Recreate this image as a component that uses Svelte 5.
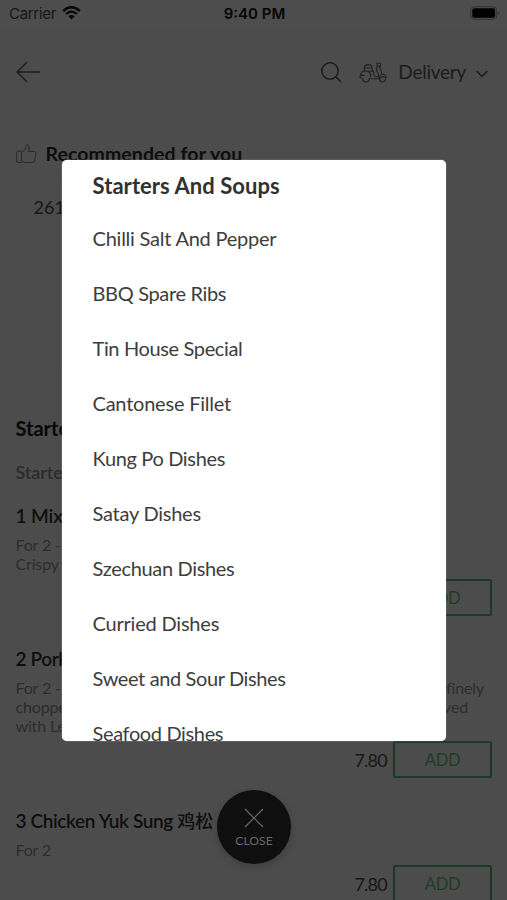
<script>
  const categories = [
    { name: 'Chilli Salt And Pepper', tracking: -0.23 },
    { name: 'BBQ Spare Ribs', tracking: -0.34 },
    { name: 'Tin House Special', tracking: -0.36 },
    { name: 'Cantonese Fillet', tracking: -0.22 },
    { name: 'Kung Po Dishes', tracking: -0.35 },
    { name: 'Satay Dishes', tracking: -0.24 },
    { name: 'Szechuan Dishes', tracking: -0.33 },
    { name: 'Curried Dishes', tracking: -0.2 },
    { name: 'Sweet and Sour Dishes', tracking: -0.38 },
    { name: 'Seafood Dishes', tracking: -0.36 }
  ];
</script>

<div class="screen">
  <header class="status">
    <span class="carrier">Carrier
      <svg width="19" height="14" viewBox="0 0 19 14" fill="none" stroke="#060606">
        <path d="M1.2 4.9Q9.5-2.4 17.8 4.9" stroke-width="2.6" />
        <path d="M4.1 8Q9.5 3.2 14.9 8" stroke-width="2.3" />
        <path d="M9.5 13.6L6.4 10.3Q9.5 7.7 12.6 10.3Z" fill="#060606" stroke="none" />
      </svg>
    </span>
    <span class="time">9:40 PM</span>
    <svg class="battery" width="30" height="14" viewBox="0 0 30 14">
      <rect x=".7" y=".7" width="26" height="12.6" rx="3.6" fill="none" stroke="#333" />
      <rect x="2.3" y="2.3" width="22.8" height="9.4" rx="2" fill="#000" />
      <path d="M28 5Q30 7 28 9Z" fill="#333" />
    </svg>
  </header>

  <nav>
    <svg class="back" width="25" height="22" viewBox="0 0 25 22" fill="none" stroke="#1d1d1d" stroke-width="1.5">
      <path d="M24 11H1.5M11 1L1.2 11L11 21" />
    </svg>
    <svg class="search" width="21" height="21" viewBox="0 0 21 21" fill="none" stroke="#1b1b1b" stroke-width="1.5">
      <circle cx="9" cy="9" r="8.2" /><path d="M14.8 14.8L20 20" />
    </svg>
    <svg class="scooter" width="28" height="21" viewBox="0 0 28 21" fill="none" stroke="#202020" stroke-width="1.1" stroke-linejoin="round" stroke-linecap="round">
      <path d="M5.2 9.2V6.3Q5.2 2.6 9.4 2.6Q13.2 2.6 13.2 6.3V9.2M5.2 6H13.2M3.3 9.3H14.5L15.2 13.4Q16 15.2 18.5 14.7Q20.3 13.6 18.6 10.3L17.2 6.8L18.2 4.2L17.8 1.2H21.5V4.2H18.5M20.2 4.8Q22.5 8.4 22.7 12.3M3.4 9.4Q.6 12.3 1 15.5L3.4 16.4M10.5 16.7H19.6Q20.2 13 23.8 12.2Q27 12.4 27 15.7L24.3 14.9Q20.9 14.5 20.2 17M1.8 13.4H5.2M9 9.5Q12.5 11 11.5 14.6" />
      <path d="M3.8 16.7A3.2 3.2 0 0 0 10.2 16.7M20.5 17A3 3 0 0 0 26.5 17" />
    </svg>
    <span class="mode">Delivery</span>
    <svg class="chevron" width="12" height="8" viewBox="0 0 12 8" fill="none" stroke="#1a1a1a" stroke-width="1.5"><path d="M.7 1L6 6.5L11.3 1" /></svg>
  </nav>

  <main>
    <h2 class="recommended">
      <svg width="21" height="20" viewBox="0 0 21 20" fill="none" stroke="#292929" stroke-width="1" stroke-linejoin="round">
        <path d="M5.5 8.3Q9.8 6 10.1 2.6V1.6Q10.4.5 11.6.7Q13.8 1.7 12.7 6.3L12.5 7.4H18Q20 7.6 19.9 9.6L18.6 16.8Q18 18.5 16.3 18.5H8.5L5.5 17.2V8.3ZM5.5 7.2H2Q.6 7.4.6 9V17Q.6 18.5 2.2 18.5H5.5" />
      </svg>
      Recommended for you
    </h2>
    <div class="cards"><div class="card">261</div><div class="card next"></div></div>
    <h2 class="section">Starters And Soups</h2>
    <h3>Starters</h3>

    <article class="first">
      <h4>1 Mix</h4>
      <p>For 2 -</p>
      <p>Crispy</p>
      <div class="buy"><button>ADD</button></div>
    </article>
    <article class="second">
      <h4>2 Pork</h4>
      <p class="wide"><span>For 2 -</span><span>finely</span></p>
      <p class="wide short"><span>chopped</span><span>served</span></p>
      <p>with Lettuce</p>
      <div class="buy"><span>7.80</span><button>ADD</button></div>
    </article>
    <article class="third">
      <h4>3 Chicken Yuk Sung <span class="cjk">鸡松</span></h4>
      <p>For 2</p>
      <div class="buy"><span>7.80</span><button>ADD</button></div>
    </article>
  </main>

  <section class="menu">
    <h1>Starters And Soups</h1>
    {#each categories as category}
      <div class="row" style:letter-spacing="{category.tracking}px">{category.name}</div>
    {/each}
  </section>

  <div class="close">
    <svg width="20" height="20" viewBox="0 0 20 20" stroke="#696969" stroke-width="1.2"><path d="M1 1L19 19M19 1L1 19" /></svg>
    <span>CLOSE</span>
  </div>
</div>

<style>
  .screen {
    position: relative; width: 507px; height: 900px; overflow: hidden;
    background: #4c4c4c; color: #161616; font-family: Lato, "Noto Sans CJK SC", sans-serif;
  }
  .screen * { box-sizing: border-box; }
  svg { display: block; flex: none; }
  h1, h2, h3, h4, p { margin: 0; white-space: nowrap; }
  .status {
    height: 28px; padding: 0 7px 0 9px; display: grid; grid-template-columns: 1fr auto 1fr;
    align-items: center; font: 15px/28px Inter, sans-serif; background: #4d4d4d;
  }
  .carrier { display: flex; align-items: center; gap: 6px; color: #151515; letter-spacing: -.3px; }
  .carrier svg { margin-top: -3px; }
  .time { font-weight: 600; color: #060606; letter-spacing: 0; }
  .battery { justify-self: end; margin-top: -2px; }
  nav { height: 88px; padding: 0 19px 0 16px; display: flex; align-items: center; }
  .search { margin-left: auto; }
  .scooter { margin-left: 17px; }
  .mode { margin-left: 11px; font-size: 19px; line-height: 24px; letter-spacing: -.25px; color: #1b1b1b; }
  .chevron { margin: 3px 0 0 10px; }
  main { padding: 25px 15px 0 15.5px; }
  .recommended { display: flex; gap: 9px; height: 39px; font-size: 19.5px; line-height: 26px; font-weight: 700; color: #0d0d0d; letter-spacing: .08px; }
  .recommended svg { margin-top: 3px; }
  .cards { height: 186px; display: flex; gap: 31px; }
  .card { flex: none; width: 436px; padding: 15px 18px; font-size: 18px; line-height: 24px; background: #4b4b4b; border-radius: 5px; }
  .next { width: 12px; padding: 0; }
  .section { margin-top: 50px; font-size: 20px; line-height: 24px; font-weight: 700; color: #070707; }
  h3 { margin-top: 20px; font-size: 18px; line-height: 24px; font-weight: 600; letter-spacing: -.1px; color: #2b2b2b; }
  article { position: relative; }
  .first { margin-top: 20px; height: 143px; }
  .second { height: 162px; }
  .third { height: 124px; }
  h4 { font-size: 19px; line-height: 24px; font-weight: 600; letter-spacing: -.38px; color: #0e0e0e; }
  .first h4 { letter-spacing: -.1px; }
  .cjk { font-size: 18px; font-weight: 500; letter-spacing: 0; line-height: 20px; }
  h4 + p { margin-top: 7px; }
  p { font-size: 16px; line-height: 19px; letter-spacing: -.15px; color: #2c2c2c; }
  .wide { display: flex; justify-content: space-between; padding-right: 8px; }
  .short { padding-right: 24px; }
  .buy { display: flex; justify-content: flex-end; align-items: center; gap: 7px; font-size: 18px; letter-spacing: -.8px; }
  .buy span { margin-right: -.8px; }
  .first .buy, .second .buy, .third .buy { margin-top: 6px; }
  .buy button {
    width: 99px; height: 37px; padding: 0; border: 2px solid #183a27; border-radius: 2px;
    background: none; font: 16.5px Lato, sans-serif; letter-spacing: -.3px; color: #1c3c2a;
  }
  .menu {
    position: absolute; left: 62px; top: 160px; width: 384px; height: 581px; padding: 10px 30.5px 0;
    border-radius: 5px; overflow: hidden; background: #fff; box-shadow: 0 0 1px #fff;
  }
  h1 { height: 41px; font-size: 22px; line-height: 32px; font-weight: 700; letter-spacing: .06px; color: #313131; }
  .row { height: 55px; font-size: 20px; line-height: 55px; color: #3d3d3d; }
  .close {
    position: absolute; left: 217px; top: 790px; width: 74px; height: 74px; border-radius: 50%;
    background: #0f0f0f; box-shadow: 0 3px 10px #00000030; color: #696969;
    display: flex; flex-direction: column; align-items: center; padding-top: 18px;
  }
  .close span { margin-top: 4px; font-size: 12.2px; line-height: 18px; }
</style>
